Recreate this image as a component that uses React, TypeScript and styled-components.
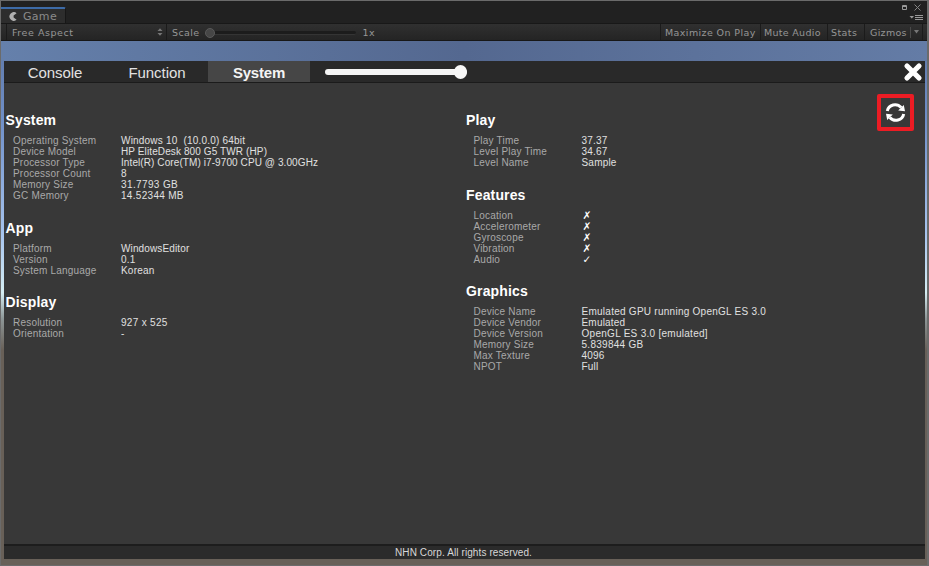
import React from "react";
import styled, { createGlobalStyle } from "styled-components";

const Global = createGlobalStyle`
  * { box-sizing: border-box; }
  html, body { margin: 0; padding: 0; background: #222; overflow: hidden; }
`;

const Window = styled.div`
  width: 929px;
  height: 566px;
  display: flex;
  flex-direction: column;
  border: 1px solid #6b6b6b;
  border-right-width: 2px;
  background: #212121;
  font-family: "DejaVu Sans", sans-serif;
  color: #969696;
`;

const TabStrip = styled.div`
  height: 22px;
  flex: none;
  display: flex;
  justify-content: space-between;
`;

const GameTab = styled.div`
  width: 65px;
  height: 17px;
  margin-top: 6px;
  padding-left: 8px;
  display: flex;
  align-items: center;
  gap: 5px;
  border-top: 2px solid #3d6ba8;
  border-right: 1px solid #171717;
  border-radius: 0 2px 0 0;
  background: #2d2d2d;
  color: #8a8a8a;
  font-size: 11px;
  line-height: 13px;
  letter-spacing: 0.3px;
`;

const WindowButtons = styled.svg`
  display: block;
  width: 32px;
  height: 22px;
`;

const Toolbar = styled.div`
  height: 18px;
  flex: none;
  display: flex;
  border-top: 1px solid #181818;
  border-bottom: 1px solid #171717;
  background: linear-gradient(#303030, #242424);
  font-size: 9.5px;
  line-height: 17px;
`;

const Cell = styled.div<{ $w: number; $pad?: number; $ls?: number; $bare?: boolean }>`
  width: ${(p) => p.$w}px;
  padding-left: ${(p) => p.$pad ?? 4}px;
  letter-spacing: ${(p) => p.$ls ?? 0.4}px;
  border-left: ${(p) => (p.$bare ? "0" : "1px solid #1b1b1b")};
  flex: none;
  display: flex;
  white-space: nowrap;
`;

const Grow = styled.div`
  flex: 1;
`;

const Arrows = styled.svg`
  display: block;
  width: 6px;
  height: 8px;
  margin: 4px 3px 0 auto;
`;

const ScaleTrack = styled.div`
  width: 151px;
  height: 4px;
  margin: 7px 7px 0 5px;
  display: flex;
  align-items: center;
  border-radius: 2px;
  background: #1c1c1c;
  border-bottom: 1px solid #343434;
`;

const ScaleThumb = styled.div`
  width: 10px;
  height: 10px;
  flex: none;
  border-radius: 50%;
  background: #464646;
  border: 1px solid #5a5a5a;
`;

const Divider = styled.div`
  width: 1px;
  height: 11px;
  margin: 3px 3px 0 auto;
  background: #4a4a4a;
`;

const DropArrow = styled.svg`
  display: block;
  width: 5px;
  height: 4px;
  margin: 6px 3px 0 0;
`;

const Viewport = styled.div`
  flex: 1;
  padding: 20px 1px 6px 3px;
  background:
    linear-gradient(90deg, #6580ab 0%, #546890 50%, #647ca6 100%) 0 0 / 100% 20px no-repeat,
    linear-gradient(#6079a8 0, #6f8fc8 15%, #a7c4ee 37%, #d5edf2 48%, #8d9697 53%, #686058 59%, #686058 100%);
`;

const Panel = styled.div`
  height: 498px;
  width: 921px;
  display: flex;
  flex-direction: column;
  background: #383838;
  font-family: "Liberation Sans", Arial, sans-serif;
`;

const Header = styled.div`
  height: 22px;
  flex: none;
  display: flex;
  background: #292929;
  border-bottom: 1px solid #1b1b1b;
`;

const Tab = styled.div<{ $active?: boolean }>`
  width: 102px;
  height: 21px;
  line-height: 24px;
  text-align: center;
  font-size: 15px;
  font-weight: ${(p) => (p.$active ? 700 : 400)};
  letter-spacing: ${(p) => (p.$active ? -0.2 : -0.05)}px;
  color: ${(p) => (p.$active ? "#f4f4f4" : "#e2e2e2")};
  background: ${(p) => (p.$active ? "#464646" : "transparent")};
`;

const Slider = styled.div`
  width: 142px;
  height: 6px;
  margin: 8px 0 0 14.5px;
  display: flex;
  align-items: center;
  justify-content: flex-end;
  border-radius: 4px;
  background: #f5f5f5;
`;

const Knob = styled.div`
  width: 13px;
  height: 14px;
  border-radius: 50%;
  background: #f7f7f7;
  flex: none;
`;

const CloseIcon = styled.svg`
  display: block;
  width: 20px;
  height: 20px;
  margin: 1px 2px 0 auto;
`;

const Body = styled.div`
  position: relative;
  flex: 1;
  display: grid;
  grid-template-columns: 460.5px 1fr;
  padding: 26px 0 0 1px;
`;

const Column = styled.div``;

const Section = styled.section<{ $gap: number }>`
  padding-bottom: ${(p) => p.$gap}px;
`;

const Title = styled.h2`
  margin: 0;
  height: 26px;
  line-height: 22px;
  padding-left: 0.5px;
  font-size: 14px;
  font-weight: 700;
  letter-spacing: 0.15px;
  color: #fff;
`;

const Row = styled.div`
  height: 11px;
  line-height: 11px;
  padding-left: 8px;
  display: grid;
  grid-template-columns: 108px 1fr;
  font-size: 10px;
  white-space: pre;
`;

const Label = styled.span`
  color: #a9a9a9;
  letter-spacing: 0.2px;
`;

const Value = styled.span<{ $ls: number }>`
  color: #e0e0e0;
  letter-spacing: ${(p) => p.$ls}px;
`;

const Mark = styled.span`
  padding-left: 1px;
  color: #fff;
  font-family: "DejaVu Sans", sans-serif;
  font-size: 10.5px;
`;

const Refresh = styled.div`
  position: absolute;
  top: 11px;
  right: 11px;
  width: 37px;
  height: 37px;
  display: flex;
  align-items: center;
  justify-content: center;
  border: 4px solid #ec1c24;
  border-radius: 2px;
`;

const Footer = styled.div`
  height: 15px;
  flex: none;
  border-top: 2px solid #1d1d1d;
  background: #2b2b2b;
  color: #d8d8d8;
  font-size: 10px;
  line-height: 14px;
  letter-spacing: 0.1px;
  padding-right: 2px;
  text-align: center;
`;

type Item = [label: string, value: string | boolean, valueSpacing?: number];
type Group = { title: string; gap?: number; items: Item[] };

const left: Group[] = [
  {
    title: "System",
    items: [
      ["Operating System", "Windows 10  (10.0.0) 64bit"],
      ["Device Model", "HP EliteDesk 800 G5 TWR (HP)", 0.11],
      ["Processor Type", "Intel(R) Core(TM) i7-9700 CPU @ 3.00GHz", 0.09],
      ["Processor Count", "8"],
      ["Memory Size", "31.7793 GB", 0.38],
      ["GC Memory", "14.52344 MB", 0.3],
    ],
  },
  {
    title: "App",
    items: [
      ["Platform", "WindowsEditor", 0.13],
      ["Version", "0.1"],
      ["System Language", "Korean"],
    ],
  },
  {
    title: "Display",
    items: [
      ["Resolution", "927 x 525", 0.3],
      ["Orientation", "-"],
    ],
  },
];

const right: Group[] = [
  {
    title: "Play",
    gap: 16,
    items: [
      ["Play Time", "37.37"],
      ["Level Play Time", "34.67"],
      ["Level Name", "Sample"],
    ],
  },
  {
    title: "Features",
    gap: 15,
    items: [
      ["Location", false],
      ["Accelerometer", false],
      ["Gyroscope", false],
      ["Vibration", false],
      ["Audio", true],
    ],
  },
  {
    title: "Graphics",
    items: [
      ["Device Name", "Emulated GPU running OpenGL ES 3.0", 0.26],
      ["Device Vendor", "Emulated"],
      ["Device Version", "OpenGL ES 3.0 [emulated]", 0.28],
      ["Memory Size", "5.839844 GB", 0.28],
      ["Max Texture", "4096"],
      ["NPOT", "Full"],
    ],
  },
];

const Groups = ({ groups }: { groups: Group[] }) => (
  <Column>
    {groups.map((g) => (
      <Section key={g.title} $gap={g.gap ?? 15.5}>
        <Title>{g.title}</Title>
        {g.items.map(([label, value, spacing = 0.2]) => (
          <Row key={label}>
            <Label>{label}</Label>
            {typeof value === "boolean" ? (
              <Mark>{value ? "✓" : "✗"}</Mark>
            ) : (
              <Value $ls={spacing}>{value}</Value>
            )}
          </Row>
        ))}
      </Section>
    ))}
  </Column>
);

export default function App() {
  return (
    <Window>
      <Global />
      <TabStrip>
        <GameTab>
          <svg width="9" height="9" viewBox="0 0 9 9">
            <path d="M7.6 1.2A4.3 4.3 0 1 0 7.6 7.8L4.6 5.6V3.4Z" fill="#b0b0b0" />
          </svg>
          Game
        </GameTab>
        <WindowButtons viewBox="0 0 32 22" fill="none">
          <path d="M7.5 4.5h4v4h-4zM7 5.5h5" stroke="#999" />
          <path d="M19.5 3.5l6 6M25.5 3.5l-6 6" stroke="#858585" />
          <path d="M20 14.5h8M20 16.5h8M20 18.5h8" stroke="#999" />
          <path d="M14.5 15h4.5l-2.2 2.6z" fill="#999" />
        </WindowButtons>
      </TabStrip>
      <Toolbar>
        <Cell $w={5} $bare />
        <Cell $w={160} $pad={5} $ls={0.55}>
          Free Aspect
          <Arrows viewBox="0 0 6 8">
            <path d="M.5 3L3 .3 5.5 3zM.5 5L3 7.7 5.5 5z" fill="#777" />
          </Arrows>
        </Cell>
        <Cell $w={220} $pad={5}>
          Scale
          <ScaleTrack>
            <ScaleThumb />
          </ScaleTrack>
          1x
        </Cell>
        <Grow />
        <Cell $w={100}>Maximize On Play</Cell>
        <Cell $w={67} $pad={3} $ls={0.3}>Mute Audio</Cell>
        <Cell $w={37} $pad={3}>Stats</Cell>
        <Cell $w={58} $pad={5} $ls={0.3}>
          Gizmos
          <Divider />
          <DropArrow viewBox="0 0 5 4">
            <path d="M0 0h5L2.5 3.4z" fill="#777" />
          </DropArrow>
        </Cell>
        <Cell $w={5} />
      </Toolbar>
      <Viewport>
        <Panel>
          <Header>
            <Tab>Console</Tab>
            <Tab>Function</Tab>
            <Tab $active>System</Tab>
            <Slider>
              <Knob />
            </Slider>
            <CloseIcon viewBox="0 0 20 20">
              <path d="M4 4L16 16M16 4L4 16" stroke="#fff" strokeWidth="5.2" strokeLinecap="round" />
            </CloseIcon>
          </Header>
          <Body>
            <Groups groups={left} />
            <Groups groups={right} />
            <Refresh>
              <svg width="21" height="21" viewBox="0 0 21 21" fill="none">
                <path d="M2.3 9C3.6 2.4 11.8.6 16.2 5.6M18.7 12C17.4 18.6 9.2 20.4 4.8 15.4" stroke="#fff" strokeWidth="3" />
                <path d="M18.8 3l1.2 6.2-6.8-.7zM2.2 18L1 11.8l6.8.7z" fill="#fff" />
              </svg>
            </Refresh>
          </Body>
          <Footer>NHN Corp. All rights reserved.</Footer>
        </Panel>
      </Viewport>
    </Window>
  );
}
